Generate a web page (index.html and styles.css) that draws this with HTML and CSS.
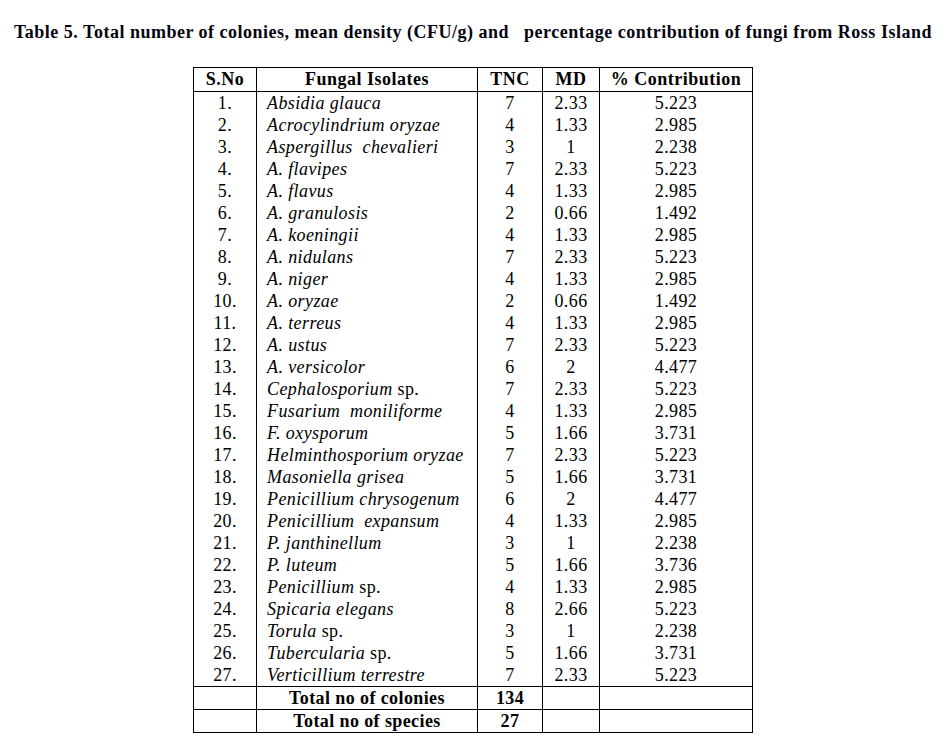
FILE: index.html
```html
<!DOCTYPE html>
<html>
<head>
<meta charset="utf-8">
<link rel="stylesheet" href="styles.css">
</head>
<body>
<h1 class="title">Table 5. Total number of colonies, mean density (CFU/g) and   percentage contribution of fungi from Ross Island</h1>
<div class="wrap">
<table class="data">
<colgroup><col class="c1"><col class="c2"><col class="c3"><col class="c4"><col class="c5"></colgroup>
<thead>
<tr><th>S.No</th><th>Fungal Isolates</th><th>TNC</th><th>MD</th><th>% Contribution</th></tr>
</thead>
<tbody>
<tr><td>1.</td><td class="name"><i>Absidia glauca</i></td><td>7</td><td>2.33</td><td>5.223</td></tr>
<tr><td>2.</td><td class="name"><i>Acrocylindrium oryzae</i></td><td>4</td><td>1.33</td><td>2.985</td></tr>
<tr><td>3.</td><td class="name"><i>Aspergillus  chevalieri</i></td><td>3</td><td>1</td><td>2.238</td></tr>
<tr><td>4.</td><td class="name"><i>A. flavipes</i></td><td>7</td><td>2.33</td><td>5.223</td></tr>
<tr><td>5.</td><td class="name"><i>A. flavus</i></td><td>4</td><td>1.33</td><td>2.985</td></tr>
<tr><td>6.</td><td class="name"><i>A. granulosis</i></td><td>2</td><td>0.66</td><td>1.492</td></tr>
<tr><td>7.</td><td class="name"><i>A. koeningii</i></td><td>4</td><td>1.33</td><td>2.985</td></tr>
<tr><td>8.</td><td class="name"><i>A. nidulans</i></td><td>7</td><td>2.33</td><td>5.223</td></tr>
<tr><td>9.</td><td class="name"><i>A. niger</i></td><td>4</td><td>1.33</td><td>2.985</td></tr>
<tr><td>10.</td><td class="name"><i>A. oryzae</i></td><td>2</td><td>0.66</td><td>1.492</td></tr>
<tr><td>11.</td><td class="name"><i>A. terreus</i></td><td>4</td><td>1.33</td><td>2.985</td></tr>
<tr><td>12.</td><td class="name"><i>A. ustus</i></td><td>7</td><td>2.33</td><td>5.223</td></tr>
<tr><td>13.</td><td class="name"><i>A. versicolor</i></td><td>6</td><td>2</td><td>4.477</td></tr>
<tr><td>14.</td><td class="name"><i>Cephalosporium</i> sp.</td><td>7</td><td>2.33</td><td>5.223</td></tr>
<tr><td>15.</td><td class="name"><i>Fusarium  moniliforme</i></td><td>4</td><td>1.33</td><td>2.985</td></tr>
<tr><td>16.</td><td class="name"><i>F. oxysporum</i></td><td>5</td><td>1.66</td><td>3.731</td></tr>
<tr><td>17.</td><td class="name"><i>Helminthosporium oryzae</i></td><td>7</td><td>2.33</td><td>5.223</td></tr>
<tr><td>18.</td><td class="name"><i>Masoniella grisea</i></td><td>5</td><td>1.66</td><td>3.731</td></tr>
<tr><td>19.</td><td class="name"><i>Penicillium chrysogenum</i></td><td>6</td><td>2</td><td>4.477</td></tr>
<tr><td>20.</td><td class="name"><i>Penicillium  expansum</i></td><td>4</td><td>1.33</td><td>2.985</td></tr>
<tr><td>21.</td><td class="name"><i>P. janthinellum</i></td><td>3</td><td>1</td><td>2.238</td></tr>
<tr><td>22.</td><td class="name"><i>P. luteum</i></td><td>5</td><td>1.66</td><td>3.736</td></tr>
<tr><td>23.</td><td class="name"><i>Penicillium</i> sp.</td><td>4</td><td>1.33</td><td>2.985</td></tr>
<tr><td>24.</td><td class="name"><i>Spicaria elegans</i></td><td>8</td><td>2.66</td><td>5.223</td></tr>
<tr><td>25.</td><td class="name"><i>Torula</i> sp.</td><td>3</td><td>1</td><td>2.238</td></tr>
<tr><td>26.</td><td class="name"><i>Tubercularia</i> sp.</td><td>5</td><td>1.66</td><td>3.731</td></tr>
<tr><td>27.</td><td class="name"><i>Verticillium terrestre</i></td><td>7</td><td>2.33</td><td>5.223</td></tr>
</tbody>
<tfoot>
<tr><td></td><td class="total">Total no of colonies</td><td class="total">134</td><td></td><td></td></tr>
<tr><td></td><td class="total">Total no of species</td><td class="total">27</td><td></td><td></td></tr>
</tfoot>
</table>
</div>
</body>
</html>
```
FILE: styles.css
```css
html, body {
  margin: 0;
  padding: 0;
  background: #fff;
}
body {
  font-family: "Liberation Serif", "Times New Roman", serif;
  color: #000;
}
.title {
  margin: 0;
  padding: 21px 0 0 14px;
  font-size: 18px;
  line-height: 22px;
  font-weight: bold;
  letter-spacing: 0.5px;
  white-space: pre;
  color: #05050f;
}
.wrap {
  padding: 24px 0 0 193px;
}
.data {
  border-collapse: collapse;
  table-layout: fixed;
  width: 559px;
  font-size: 18px;
  letter-spacing: 0.4px;
}
.c1 { width: 63px; }
.c2 { width: 221px; }
.c3 { width: 65px; }
.c4 { width: 57px; }
.c5 { width: 153px; }
.data th, .data td {
  border-left: 1px solid #000;
  border-right: 1px solid #000;
  padding: 0;
  text-align: center;
  white-space: pre;
  overflow: hidden;
}
.data th {
  border-top: 1px solid #000;
  border-bottom: 1px solid #000;
  height: 23px;
  line-height: 23px;
  font-weight: bold;
  letter-spacing: 0.5px;
}
.data tbody td {
  height: 21px;
  line-height: 21px;
  padding-top: 1px;
}
.data td.name {
  text-align: left;
  padding-left: 10px;
}
.data tfoot td {
  border-top: 1px solid #000;
  border-bottom: 1px solid #000;
  height: 22px;
  line-height: 22px;
}
.data td.total {
  font-weight: bold;
}
```
